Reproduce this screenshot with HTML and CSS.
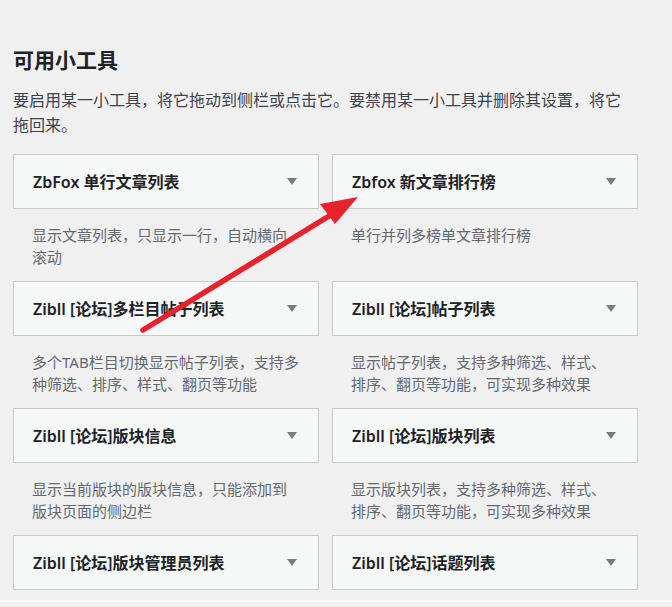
FILE: index.html
```html
<!DOCTYPE html>
<html lang="zh-CN">
<head>
    <meta charset="UTF-8">
    <meta name="viewport" content="width=device-width, initial-scale=1.0">
    <title>可用小工具</title>
    <link rel="stylesheet" href="styles.css">
</head>
<body>
    <div class="widgets-wrap">
        <h2 class="widgets-title">可用小工具</h2>
        <p class="widgets-intro">要启用某一小工具，将它拖动到侧栏或点击它。要禁用某一小工具并删除其设置，将它拖回来。</p>

        <div class="widget-list">
            <div class="widget">
                <div class="widget-top">
                    <h3 class="widget-name">ZbFox 单行文章列表</h3>
                    <span class="widget-toggle"></span>
                </div>
                <div class="widget-desc">显示文章列表，只显示一行，自动横向滚动</div>
            </div>
            <div class="widget">
                <div class="widget-top">
                    <h3 class="widget-name">Zbfox 新文章排行榜</h3>
                    <span class="widget-toggle"></span>
                </div>
                <div class="widget-desc">单行并列多榜单文章排行榜</div>
            </div>
            <div class="widget">
                <div class="widget-top">
                    <h3 class="widget-name">Zibll [论坛]多栏目帖子列表</h3>
                    <span class="widget-toggle"></span>
                </div>
                <div class="widget-desc">多个TAB栏目切换显示帖子列表，支持多种筛选、排序、样式、翻页等功能</div>
            </div>
            <div class="widget">
                <div class="widget-top">
                    <h3 class="widget-name">Zibll [论坛]帖子列表</h3>
                    <span class="widget-toggle"></span>
                </div>
                <div class="widget-desc">显示帖子列表，支持多种筛选、样式、排序、翻页等功能，可实现多种效果</div>
            </div>
            <div class="widget">
                <div class="widget-top">
                    <h3 class="widget-name">Zibll [论坛]版块信息</h3>
                    <span class="widget-toggle"></span>
                </div>
                <div class="widget-desc">显示当前版块的版块信息，只能添加到版块页面的侧边栏</div>
            </div>
            <div class="widget">
                <div class="widget-top">
                    <h3 class="widget-name">Zibll [论坛]版块列表</h3>
                    <span class="widget-toggle"></span>
                </div>
                <div class="widget-desc">显示版块列表，支持多种筛选、样式、排序、翻页等功能，可实现多种效果</div>
            </div>
            <div class="widget">
                <div class="widget-top">
                    <h3 class="widget-name">Zibll [论坛]版块管理员列表</h3>
                    <span class="widget-toggle"></span>
                </div>
            </div>
            <div class="widget">
                <div class="widget-top">
                    <h3 class="widget-name">Zibll [论坛]话题列表</h3>
                    <span class="widget-toggle"></span>
                </div>
            </div>
        </div>
    </div>
    <div class="page-foot"></div>

    <!-- 标注箭头 -->
    <svg class="annotation" width="672" height="607" viewBox="0 0 672 607">
        <line x1="143" y1="330" x2="334" y2="213" stroke="#e8222a" stroke-width="5.5" stroke-linecap="round"/>
        <polygon points="358,197 320,204 335,224" fill="#e8222a"/>
    </svg>
</body>
</html>
```

FILE: styles.css
```css
* {
    margin: 0;
    padding: 0;
    box-sizing: border-box;
}

body {
    background-color: #f0f0f1;
    font-family: "Noto Sans", "Noto Sans CJK SC", sans-serif;
    color: #1d2327;
    width: 672px;
    height: 607px;
    overflow: hidden;
    position: relative;
}

.widgets-wrap {
    width: 625px;
    margin-left: 13px;
    padding-top: 46px;
}

.widgets-title {
    font-size: 21px;
    line-height: 28px;
    font-weight: 700;
    color: #1d2327;
    margin-bottom: 14px;
}

.widgets-intro {
    font-size: 16px;
    line-height: 25px;
    color: #3c434a;
    max-width: 615px;
    margin-bottom: 16px;
}

.widget-list {
    display: grid;
    grid-template-columns: 306px 306px;
    column-gap: 13px;
    row-gap: 13px;
}

.widget-top {
    display: flex;
    align-items: center;
    justify-content: space-between;
    height: 55px;
    padding: 0 21px 0 19px;
    background-color: #f6f7f7;
    border: 1px solid #c9cacc;
}

.widget-name {
    font-size: 16px;
    font-weight: 600;
    line-height: 22px;
    white-space: nowrap;
}

.widget-toggle {
    width: 0;
    height: 0;
    border-left: 5px solid transparent;
    border-right: 5px solid transparent;
    border-top: 7px solid #787c82;
}

.widget-desc {
    margin-top: 15px;
    padding-left: 19px;
    width: 288px;
    font-size: 15px;
    line-height: 22px;
    color: #646970;
}

.page-foot {
    position: absolute;
    left: 0;
    top: 600px;
    width: 672px;
    height: 7px;
    border-top: 2px solid #fafafa;
    background-color: #efeff0;
}

.annotation {
    position: absolute;
    left: 0;
    top: 0;
    pointer-events: none;
}
```
